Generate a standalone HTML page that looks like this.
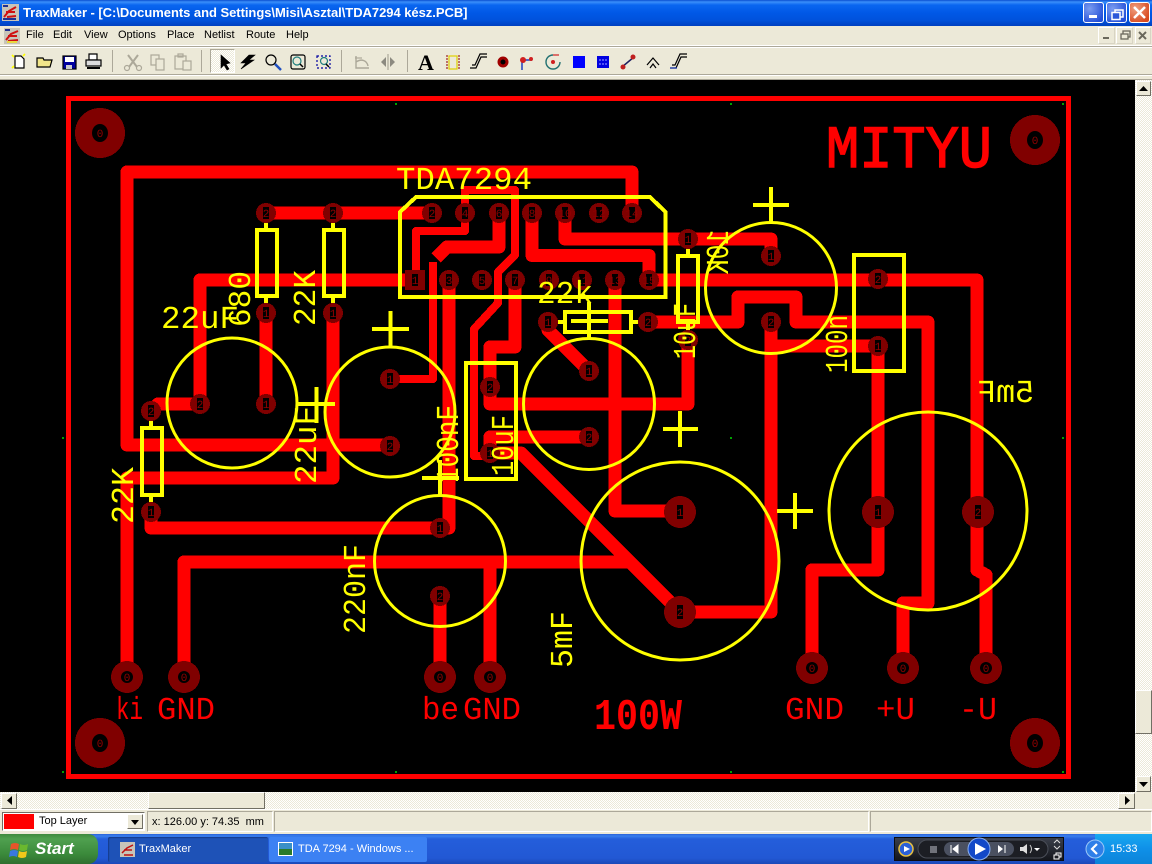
<!DOCTYPE html>
<html><head><meta charset="utf-8"><title>TraxMaker</title>
<style>
html,body{margin:0;padding:0;width:1152px;height:864px;overflow:hidden;background:#ece9d8;font-family:"Liberation Sans",sans-serif}
.a{position:absolute}
.m{position:absolute;top:27px;font-size:11px;line-height:16px;color:#000}
.dith{background:repeating-conic-gradient(#fff 0 25%,#ece9d8 0 50%) 0 0/2px 2px}
.btn{position:absolute;background:#ece9d8;box-sizing:border-box;border:1px solid;border-color:#fff #716f64 #716f64 #fff}
.sunk{position:absolute;box-sizing:border-box;border:1px solid;border-color:#aca899 #fff #fff #aca899}
.wb{position:absolute;top:2px;width:21px;height:21px;box-sizing:border-box;border:1px solid #fff;border-radius:3px;background:radial-gradient(circle at 30% 30%,#7a9cf0,#2450d8 80%)}
#pcb text{font-family:"Liberation Mono",monospace;font-size:32px;text-rendering:geometricPrecision}
#pcb .y text,#pcb text.y{fill:#ff0}
#pcb .r text{fill:#f00}
#pcb .n text{font-size:11px;fill:#900000;text-anchor:middle}
</style></head><body>

<!-- title bar -->
<div class="a" style="left:0;top:0;width:1152px;height:26px;background:linear-gradient(#0a4fd0 0,#3a8ffa 2px,#0a66f0 5px,#0058e6 13px,#0052dc 20px,#0040c0 26px)"></div>
<div class="a" style="left:23px;top:4px;font-size:13px;line-height:18px;font-weight:bold;color:#fff;white-space:pre;letter-spacing:-.04px">TraxMaker - [C:\Documents and Settings\Misi\Asztal\TDA7294 kész.PCB]</div>
<div class="wb" style="left:1083px"></div>
<div class="wb" style="left:1106px"></div>
<div class="wb" style="left:1129px;background:radial-gradient(circle at 30% 30%,#f0a080,#d84a20 80%)"></div>

<!-- menu -->
<div class="a" style="left:0;top:26px;width:1152px;height:20px;background:#ece9d8"></div>
<div class="m" style="left:26px">File</div>
<div class="m" style="left:53px">Edit</div>
<div class="m" style="left:84px">View</div>
<div class="m" style="left:118px">Options</div>
<div class="m" style="left:167px">Place</div>
<div class="m" style="left:204px">Netlist</div>
<div class="m" style="left:246px">Route</div>
<div class="m" style="left:286px">Help</div>
<div class="btn" style="left:1098px;top:27px;width:17px;height:17px;border-color:#fff #d8d4c4 #d8d4c4 #fff"></div>
<div class="btn" style="left:1116px;top:27px;width:17px;height:17px;border-color:#fff #d8d4c4 #d8d4c4 #fff"></div>
<div class="btn" style="left:1135px;top:27px;width:16px;height:17px;border-color:#fff #d8d4c4 #d8d4c4 #fff"></div>
<div class="a" style="left:0;top:45px;width:1152px;height:1px;background:#fff"></div>
<div class="a" style="left:0;top:46px;width:1152px;height:1px;background:#aca899"></div>
<div class="a" style="left:0;top:47px;width:1152px;height:1px;background:#fff"></div>
<div class="a" style="left:0;top:74px;width:1152px;height:1px;background:#aca899"></div>
<div class="a" style="left:0;top:75px;width:1152px;height:1px;background:#fff"></div>
<div class="a" style="left:0;top:79px;width:1152px;height:1px;background:#aca899"></div>

<!-- selected tool button -->
<div class="a dith" style="left:210px;top:49px;width:25px;height:24px;border:1px solid;border-color:#aca899 #fff #fff #aca899;box-sizing:border-box"></div>

<!-- canvas -->
<div class="a" style="left:0;top:80px;width:1135px;height:712px;background:#000"></div>

<!-- PCB + all icons -->
<svg id="pcb" class="a" style="left:0;top:0" width="1152" height="864" viewBox="0 0 1152 864" xmlns="http://www.w3.org/2000/svg">
<!-- app icon -->
<g>
<rect x="2" y="4" width="17" height="17" fill="#c8c4b8"/>
<path d="M4 17 L9 11 L16 7 M6 12 L15 12 M7 17 L16 16" stroke="#d01010" stroke-width="2" fill="none"/>
<path d="M3 6 H8 M3 19 H16" stroke="#203090" stroke-width="2"/>
<rect x="4" y="28" width="16" height="16" fill="#c8c4b8"/>
<path d="M6 40 L11 34 L18 31 M8 36 L17 36 M8 41 L18 40" stroke="#d01010" stroke-width="2" fill="none"/>
<path d="M5 30 H10" stroke="#203090" stroke-width="2"/><path d="M7 42 H17" stroke="#e8d840" stroke-width="2"/>
</g>
<!-- window buttons glyphs -->
<rect x="1089" y="15" width="8" height="3" fill="#fff"/>
<rect x="1115" y="10" width="8" height="7" fill="none" stroke="#fff" stroke-width="1.500"/><rect x="1112" y="12.500" width="8" height="7" fill="#2c58d8" stroke="#fff" stroke-width="1.500"/>
<path d="M1134 7 L1145 18 M1145 7 L1134 18" stroke="#fff" stroke-width="2.500"/>
<rect x="1103" y="37" width="6" height="2" fill="#6a685c"/>
<rect x="1123" y="31" width="7" height="6" fill="none" stroke="#6a685c" stroke-width="1.300"/><rect x="1121" y="34" width="7" height="5" fill="#ece9d8" stroke="#6a685c" stroke-width="1.300"/>
<path d="M1139 32 L1146 39 M1146 32 L1139 39" stroke="#6a685c" stroke-width="2"/>
<!-- toolbar separators -->
<g fill="#aca899"><rect x="112" y="50" width="1" height="22"/><rect x="201" y="50" width="1" height="22"/><rect x="341" y="50" width="1" height="22"/><rect x="407" y="50" width="1" height="22"/></g>
<!-- toolbar icons -->
<g stroke-width="1.200" fill="none">
<path d="M15 56 H21 L24 59 V68 H15 Z" fill="#fff" stroke="#000"/><path d="M12 55 L14 57 M12 68 L14 66 M25 54 L23 56" stroke="#ff0" stroke-width="1.600"/>
<path d="M37 58 H43 L44 60 H52 L50 67 H37 Z" fill="#f2e68a" stroke="#000"/>
<rect x="63" y="56" width="13" height="13" fill="#0000a0" stroke="#000"/><rect x="65" y="57" width="9" height="5" fill="#fff"/><rect x="66" y="65" width="6" height="4" fill="#ccc"/>
<path d="M89 54 H97 V60 H89 Z" fill="#fff" stroke="#000"/><rect x="86" y="60" width="15" height="6" fill="#ddd" stroke="#000"/><path d="M87 68 H100" stroke="#000" stroke-width="2"/>
<path d="M128 55 L137 67 M138 55 L129 67" stroke="#aca899" stroke-width="2"/><circle cx="127" cy="68" r="2.500" stroke="#aca899"/><circle cx="139" cy="68" r="2.500" stroke="#aca899"/>
<rect x="151" y="55" width="8" height="10" fill="#ece9d8" stroke="#aca899"/><rect x="156" y="59" width="8" height="11" fill="#ece9d8" stroke="#aca899"/>
<rect x="175" y="56" width="11" height="13" stroke="#aca899"/><rect x="178" y="54" width="5" height="3" stroke="#aca899"/><rect x="183" y="61" width="8" height="9" fill="#ece9d8" stroke="#aca899"/>
<path d="M221 55 V68 L224 65 L227 70 L229 69 L226 64 L230 63 Z" fill="#000" stroke="#000" stroke-width=".6"/>
<path d="M255 55 H249 L241 63 H246 L241 69 L254 60 H249 Z" fill="#000" stroke="#000" stroke-width=".6"/>
<circle cx="271" cy="60" r="5" stroke="#000"/><path d="M275 64 L281 70" stroke="#2050c0" stroke-width="2.500"/>
<rect x="291" y="55" width="14" height="14" rx="2" stroke="#000"/><circle cx="297" cy="61" r="4" stroke="#208080"/><path d="M300 64 L303 67" stroke="#000" stroke-width="1.500"/>
<rect x="317" y="56" width="13" height="12" stroke="#0000a0" stroke-dasharray="2 2"/><circle cx="324" cy="61" r="3.500" stroke="#208080"/><path d="M326 64 L329 67" stroke="#000" stroke-width="1.500"/>
<path d="M356 56 V68 H369 M356 62 C362 58 367 61 368 66" stroke="#aca899" stroke-width="1.400"/><path d="M355 58 L362 58" stroke="#aca899"/>
<path d="M386 57 L381 62 L386 67 Z M390 57 L395 62 L390 67 Z" fill="#8c8a80" stroke="none"/><path d="M388 54 V70" stroke="#aca899"/>
<rect x="449" y="56" width="8" height="13" fill="#ece9d8" stroke="#e0d000"/><path d="M447 55 V70 M459 55 V70" stroke="#a02020" stroke-dasharray="2 1"/>
<path d="M470 68 H476 L481 57 H487 M472 65 H475 L480 54 H487" stroke="#000"/>
<circle cx="503" cy="62" r="4" fill="#000" stroke="#a00000" stroke-width="3"/>
<path d="M522 70 V60 H532" stroke="#2040c0" stroke-width="1.500"/><circle cx="523" cy="60" r="3" fill="#d02020"/><circle cx="531" cy="59" r="2" fill="#d02020"/>
<path d="M553 55 A7 7 0 1 0 560 62" stroke="#207070" stroke-width="1.400"/><circle cx="553" cy="62" r="2" fill="#d02020"/><path d="M553 55 H559" stroke="#d02020"/>
<rect x="573" y="56" width="12" height="12" fill="#0000ff"/>
<rect x="597" y="56" width="12" height="12" fill="#0000e0"/><path d="M599 60 H607 M599 64 H607" stroke="#8080ff" stroke-dasharray="2 1"/>
<path d="M622 67 L634 57" stroke="#202060" stroke-width="1.500"/><circle cx="623" cy="67" r="2.500" fill="#c02020"/><circle cx="633" cy="57" r="2.500" fill="#c02020"/>
<path d="M647 65 L653 58 L659 65 M650 68 L653 64 L656 68" stroke="#000"/>
<path d="M670 68 H676 L681 57 H687 M672 65 H675 L680 54 H687" stroke="#000"/><path d="M670 68 H677" stroke="#2040c0"/>
</g>
<text x="418" y="70" style="font-family:'Liberation Serif',serif;font-size:22px;font-weight:bold" fill="#000">A</text>

<!-- traces -->
<g shape-rendering="crispEdges" fill="none" stroke="#f00" stroke-linejoin="round">
<rect x="68.500" y="98.500" width="1000" height="678" stroke-width="5" stroke-linejoin="miter"/>
<g stroke-width="13">
<path d="M632 213 V172 H127 V445 H390"/>
<path d="M127 677 V478 H333 V313"/>
<path d="M151 512 V528 H440"/>
<path d="M151 411 L158 404 H200 V280 H415"/>
<path d="M266 313 V404"/>
<path d="M266 213 H432"/>
<path d="M499 213 V247 H447 L436 258"/>
<path d="M449 280 V528 H440"/>
<path d="M649 280 H977 V570 L986 575 V668"/>
<path d="M440 596 V677"/>
<path d="M184 677 V562 H630"/>
<path d="M490 562 V677"/>
<path d="M589 437 H490 V453 H521 L680 612"/>
<path d="M548 322 V330 L589 371"/>
<path d="M648 322 H738 V297 H796 V322 H928 V603 H903 V668"/>
<path d="M771 322 V612 H680"/>
<path d="M771 346 H878 V570 H812 V668"/>
<path d="M565 213 V239 H771 V256"/>
<path d="M532 213 V255.500 H649 V280"/>
<path d="M615 280 V511 H680"/>
<path d="M515 280 V347 H490 V404 H688 V340"/>
</g>
<g stroke-width="8">
<path d="M465 213 V231 H416 V280"/>
<path d="M433 262 V379 H390"/>
<path d="M465 213 V190 H515 V255 L498 272 V303 L474 329 V456 H490"/>
</g>
</g>

<!-- pads -->
<g shape-rendering="crispEdges" fill="#800000">
<circle cx="100" cy="133" r="25"/><circle cx="1035" cy="140" r="25"/><circle cx="100" cy="743" r="25"/><circle cx="1035" cy="743" r="25"/>
<circle cx="127" cy="677" r="16"/><circle cx="184" cy="677" r="16"/><circle cx="440" cy="677" r="16"/><circle cx="490" cy="677" r="16"/><circle cx="812" cy="668" r="16"/><circle cx="903" cy="668" r="16"/><circle cx="986" cy="668" r="16"/>
<circle cx="680" cy="512" r="16"/><circle cx="680" cy="612" r="16"/><circle cx="878" cy="512" r="16"/><circle cx="978" cy="512" r="16"/>
<rect x="405" y="270" width="20" height="20"/>
<circle cx="432" cy="213" r="10"/><circle cx="465" cy="213" r="10"/><circle cx="499" cy="213" r="10"/><circle cx="532" cy="213" r="10"/><circle cx="565" cy="213" r="10"/><circle cx="599" cy="213" r="10"/><circle cx="632" cy="213" r="10"/>
<circle cx="449" cy="280" r="10"/><circle cx="482" cy="280" r="10"/><circle cx="515" cy="280" r="10"/><circle cx="549" cy="280" r="10"/><circle cx="582" cy="280" r="10"/><circle cx="615" cy="280" r="10"/><circle cx="649" cy="280" r="10"/>
<circle cx="266" cy="213" r="10"/><circle cx="333" cy="213" r="10"/><circle cx="266" cy="313" r="10"/><circle cx="333" cy="313" r="10"/>
<circle cx="200" cy="404" r="10"/><circle cx="266" cy="404" r="10"/><circle cx="151" cy="411" r="10"/><circle cx="151" cy="512" r="10"/>
<circle cx="390" cy="379" r="10"/><circle cx="390" cy="446" r="10"/><circle cx="440" cy="528" r="10"/><circle cx="440" cy="596" r="10"/>
<circle cx="490" cy="387" r="10"/><circle cx="490" cy="453" r="10"/><circle cx="589" cy="371" r="10"/><circle cx="589" cy="437" r="10"/>
<circle cx="548" cy="322" r="10"/><circle cx="648" cy="322" r="10"/><circle cx="688" cy="239" r="10"/><circle cx="688" cy="340" r="10"/>
<circle cx="771" cy="256" r="10"/><circle cx="771" cy="322" r="10"/><circle cx="878" cy="279" r="10"/><circle cx="878" cy="346" r="10"/>
</g>
<!-- holes -->
<g fill="#000">
<ellipse cx="100" cy="133" rx="8" ry="9"/><ellipse cx="1035" cy="140" rx="8" ry="9"/><ellipse cx="100" cy="743" rx="8" ry="9"/><ellipse cx="1035" cy="743" rx="8" ry="9"/>
<circle cx="127" cy="677" r="6"/><circle cx="184" cy="677" r="6"/><circle cx="440" cy="677" r="6"/><circle cx="490" cy="677" r="6"/><circle cx="812" cy="668" r="6"/><circle cx="903" cy="668" r="6"/><circle cx="986" cy="668" r="6"/>
<rect x="677" y="505" width="6" height="14"/><rect x="677" y="605" width="6" height="14"/><rect x="875" y="505" width="6" height="14"/><rect x="975" y="505" width="6" height="14"/>
</g>
<g fill="#000" stroke="#000" stroke-width="2">
<path d="M413 275h4v10h-4zM430 208h4v10h-4zM463 208h4v10h-4zM497 208h4v10h-4zM530 208h4v10h-4zM563 208h4v10h-4zM597 208h4v10h-4zM630 208h4v10h-4zM447 275h4v10h-4zM480 275h4v10h-4zM513 275h4v10h-4zM547 275h4v10h-4zM580 275h4v10h-4zM613 275h4v10h-4zM647 275h4v10h-4zM264 208h4v10h-4zM331 208h4v10h-4zM264 308h4v10h-4zM331 308h4v10h-4zM198 399h4v10h-4zM264 399h4v10h-4zM149 406h4v10h-4zM149 507h4v10h-4zM388 374h4v10h-4zM388 441h4v10h-4zM438 523h4v10h-4zM438 591h4v10h-4zM488 382h4v10h-4zM488 448h4v10h-4zM587 366h4v10h-4zM587 432h4v10h-4zM546 317h4v10h-4zM646 317h4v10h-4zM686 234h4v10h-4zM686 335h4v10h-4zM769 251h4v10h-4zM769 317h4v10h-4zM876 274h4v10h-4zM876 341h4v10h-4z"/>
</g>
<g class="n">
<text x="100" y="137">0</text><text x="1035" y="144">0</text><text x="100" y="747">0</text><text x="1035" y="747">0</text>
<text x="127" y="681">0</text><text x="184" y="681">0</text><text x="440" y="681">0</text><text x="490" y="681">0</text><text x="812" y="672">0</text><text x="903" y="672">0</text><text x="986" y="672">0</text>
<text x="680" y="516">1</text><text x="680" y="616">2</text><text x="878" y="516">1</text><text x="978" y="516">2</text>
<text x="415" y="284">1</text><text x="432" y="217">2</text><text x="465" y="217">4</text><text x="499" y="217">6</text><text x="532" y="217">8</text><text x="565" y="217">10</text><text x="599" y="217">12</text><text x="632" y="217">14</text>
<text x="449" y="284">3</text><text x="482" y="284">5</text><text x="515" y="284">7</text><text x="549" y="284">9</text><text x="582" y="284">11</text><text x="615" y="284">13</text><text x="649" y="284">15</text>
<text x="266" y="217">2</text><text x="333" y="217">2</text><text x="266" y="317">1</text><text x="333" y="317">1</text>
<text x="200" y="408">2</text><text x="266" y="408">1</text><text x="151" y="415">2</text><text x="151" y="516">1</text>
<text x="390" y="383">1</text><text x="390" y="450">2</text><text x="440" y="532">1</text><text x="440" y="600">2</text>
<text x="490" y="391">2</text><text x="490" y="457">1</text><text x="589" y="375">1</text><text x="589" y="441">2</text>
<text x="548" y="326">1</text><text x="648" y="326">2</text><text x="688" y="243">1</text><text x="688" y="344">2</text>
<text x="771" y="260">1</text><text x="771" y="326">2</text><text x="878" y="283">2</text><text x="878" y="350">1</text>
</g>

<!-- silkscreen -->
<g shape-rendering="crispEdges" fill="none" stroke="#ff0" stroke-width="4">
<path d="M400 212 L416 197 H650 L665.500 212 V297 H400 Z"/>
<rect x="257" y="230" width="20" height="66"/><path d="M266 223 V230 M266 296 V303"/>
<rect x="324" y="230" width="20" height="66"/><path d="M333 223 V230 M333 296 V303"/>
<rect x="142" y="428" width="20" height="67"/><path d="M151 421 V428 M151 495 V502"/>
<rect x="565" y="312" width="66" height="20"/><path d="M558 322 H565 M631 322 H638"/>
<rect x="678" y="256" width="20" height="66"/><path d="M688 249 V256 M688 322 V330"/>
<rect x="466" y="363" width="50" height="116"/>
<rect x="854" y="255" width="50" height="116"/>
<path d="M372 329 H409 M390.500 311 V347 M298 404 H335 M316.500 387 V423 M422 478 H459 M440 460 V495 M571 321 H608 M589 302 V338 M753 205 H789 M771 187 V222 M663 429 H698 M680 411 V447 M777 511 H813 M795 493 V529"/>
</g>
<g fill="none" stroke="#ff0" stroke-width="3">
<circle cx="232" cy="403" r="65"/><circle cx="390" cy="412" r="65"/><circle cx="440" cy="561" r="65.500"/><circle cx="589" cy="404" r="65.500"/><circle cx="771" cy="288" r="65.500"/><circle cx="680" cy="561" r="99"/><circle cx="928" cy="511" r="99"/>
</g>
<g class="y">
<text x="396" y="189" textLength="136" lengthAdjust="spacingAndGlyphs">TDA7294</text>
<text x="161" y="328" textLength="78" lengthAdjust="spacingAndGlyphs">22uF</text>
<text x="537" y="303" textLength="56" lengthAdjust="spacingAndGlyphs">22k</text>
<text transform="translate(250,327) rotate(-90)" textLength="56" lengthAdjust="spacingAndGlyphs">680</text>
<text transform="translate(315,326) rotate(-90)" textLength="56" lengthAdjust="spacingAndGlyphs">22K</text>
<text transform="translate(316,484) rotate(-90)" textLength="78" lengthAdjust="spacingAndGlyphs">22uF</text>
<text transform="translate(133,524) rotate(-90)" textLength="57" lengthAdjust="spacingAndGlyphs">22K</text>
<text transform="translate(458,483) rotate(-90)" textLength="78" lengthAdjust="spacingAndGlyphs">100nF</text>
<text transform="translate(513,476) rotate(-90)" textLength="61" lengthAdjust="spacingAndGlyphs">10uF</text>
<text transform="translate(695,359) rotate(-90)" textLength="56" lengthAdjust="spacingAndGlyphs">10uF</text>
<text transform="translate(572,668) rotate(-90)" textLength="57" lengthAdjust="spacingAndGlyphs">5mF</text>
<text transform="translate(365,634) rotate(-90)" textLength="90" lengthAdjust="spacingAndGlyphs">220nF</text>
<text transform="translate(847,373) rotate(-90)" textLength="58" lengthAdjust="spacingAndGlyphs">100n</text>
<text transform="translate(728,230) rotate(90) scale(1,-1)" textLength="44" lengthAdjust="spacingAndGlyphs">10K</text>
<text transform="translate(1034,402) scale(-1,1)" textLength="57" lengthAdjust="spacingAndGlyphs">5mF</text>
</g>
<g class="r">
<text x="826" y="167" textLength="166" lengthAdjust="spacingAndGlyphs" stroke="#f00" stroke-width="1.500" style="font-size:60px">MITYU</text>
<text x="594" y="729" textLength="88" lengthAdjust="spacingAndGlyphs" style="font-size:44px;font-weight:bold">100W</text>
<text x="116" y="719" textLength="27" lengthAdjust="spacingAndGlyphs">ki</text>
<text x="157" y="719" textLength="58" lengthAdjust="spacingAndGlyphs">GND</text>
<text x="422" y="719" textLength="37" lengthAdjust="spacingAndGlyphs">be</text>
<text x="463" y="719" textLength="58" lengthAdjust="spacingAndGlyphs">GND</text>
<text x="785" y="719" textLength="59" lengthAdjust="spacingAndGlyphs">GND</text>
<text x="876" y="719" textLength="39" lengthAdjust="spacingAndGlyphs">+U</text>
<text x="959" y="719" textLength="38" lengthAdjust="spacingAndGlyphs">-U</text>
</g>
<!-- grid marks -->
<g fill="#00a000">
<rect x="395" y="103" width="2" height="2"/><rect x="730" y="103" width="2" height="2"/><rect x="62" y="771" width="2" height="2"/><rect x="1062" y="771" width="2" height="2"/><rect x="62" y="437" width="2" height="2"/><rect x="730" y="437" width="2" height="2"/><rect x="395" y="771" width="2" height="2"/><rect x="730" y="771" width="2" height="2"/><rect x="1062" y="103" width="2" height="2"/><rect x="1062" y="437" width="2" height="2"/>
</g>
</svg>

<!-- scrollbars -->
<div class="a dith" style="left:1135px;top:80px;width:17px;height:712px"></div>
<div class="btn" style="left:1136px;top:81px;width:15px;height:15px"></div>
<div class="btn" style="left:1135px;top:690px;width:17px;height:44px"></div>
<div class="btn" style="left:1136px;top:776px;width:15px;height:16px"></div>
<div class="a dith" style="left:0;top:792px;width:1135px;height:17px"></div>
<div class="btn" style="left:1px;top:793px;width:16px;height:16px"></div>
<div class="btn" style="left:148px;top:792px;width:117px;height:17px"></div>
<div class="btn" style="left:1118px;top:793px;width:17px;height:16px"></div>
<div class="a" style="left:1135px;top:792px;width:17px;height:18px;background:#ece9d8"></div>

<!-- status bar -->
<div class="a" style="left:0;top:809px;width:1152px;height:25px;background:#ece9d8;border-top:1px solid #fff;box-sizing:border-box"></div>
<div class="sunk" style="left:2px;top:812px;width:143px;height:19px;background:#fff;border-color:#716f64 #fff #fff #716f64"></div>
<div class="a" style="left:4px;top:814px;width:30px;height:15px;background:#f00"></div>
<div class="a" style="left:39px;top:814px;font-size:11px;line-height:14px;color:#000">Top Layer</div>
<div class="btn" style="left:127px;top:814px;width:16px;height:15px"></div>
<div class="sunk" style="left:147px;top:811px;width:126px;height:21px"></div>
<div class="a" style="left:152px;top:815px;font-size:11px;line-height:14px;color:#000;white-space:pre">x: 126.00 y: 74.35  mm</div>
<div class="sunk" style="left:274px;top:811px;width:595px;height:21px"></div>
<div class="sunk" style="left:870px;top:811px;width:282px;height:21px"></div>

<!-- taskbar -->
<div class="a" style="left:0;top:834px;width:1152px;height:30px;background:linear-gradient(#2a62d8 0,#3a80ee 2px,#245edb 5px,#2258d4 24px,#1a48b8 30px)"></div>
<div class="a" style="left:0;top:834px;width:98px;height:30px;border-radius:0 10px 10px 0;background:linear-gradient(#3e8a3e 0,#4fa04f 5px,#3b8a3b 20px,#2f6f2f 30px)"></div>
<div class="a" style="left:35px;top:838px;font-size:17px;line-height:22px;font-weight:bold;font-style:italic;color:#fff">Start</div>
<div class="a" style="left:108px;top:837px;width:160px;height:25px;background:#1e52b7;border-radius:2px;box-shadow:inset 1px 1px 1px #163c8c"></div>
<div class="a" style="left:139px;top:842px;font-size:11px;line-height:15px;color:#fff">TraxMaker</div>
<div class="a" style="left:269px;top:837px;width:158px;height:25px;background:#3c81f3;border-radius:2px"></div>
<div class="a" style="left:298px;top:842px;font-size:11px;line-height:15px;color:#fff;white-space:pre">TDA 7294 - Windows ...</div>
<div class="a" style="left:894px;top:837px;width:170px;height:24px;background:linear-gradient(#3a3f4a,#14161c);border:1px solid #0a0c12;box-sizing:border-box"></div>
<div class="a" style="left:1095px;top:834px;width:57px;height:30px;background:linear-gradient(#18a8f0,#0f90e8 50%,#0c84d8)"></div>
<div class="a" style="left:1110px;top:842px;font-size:11px;line-height:15px;color:#fff">15:33</div>

<svg class="a" style="left:0;top:780px" width="1152" height="84" viewBox="0 780 1152 84" xmlns="http://www.w3.org/2000/svg">
<!-- scroll arrows -->
<path d="M12 796 V805 L7 800.500 Z" fill="#000"/>
<path d="M1125 796 V805 L1130 800.500 Z" fill="#000"/>
<path d="M1139 782 H1148 L1143.500 787 Z" fill="#000"/>
<path d="M131 820 H139 L135 825 Z" fill="#000"/>
<!-- start flag -->
<path d="M11 844 Q15 842 19 844 L18 850 Q14 848 10 850 Z" fill="#e8552a"/>
<path d="M20 844 Q24 846 28 844 L27 850 Q23 852 19 850 Z" fill="#6ab82e"/>
<path d="M10 851 Q14 849 18 851 L17 857 Q13 855 9 857 Z" fill="#3a78e0"/>
<path d="M19 851 Q23 853 27 851 L26 857 Q22 859 18 857 Z" fill="#f2c81a"/>
<!-- taskbar icons -->
<rect x="120" y="842" width="15" height="15" fill="#c8c4b8"/><path d="M122 853 L127 848 L133 845 M124 850 H132 M124 855 H133" stroke="#c01010" stroke-width="1.500" fill="none"/>
<rect x="278" y="842" width="15" height="14" fill="#fff"/><rect x="279" y="843" width="13" height="6" fill="#3a90c8"/><rect x="279" y="849" width="13" height="6" fill="#2a7a2a"/>
<!-- WMP -->
<circle cx="906" cy="849" r="7" fill="#2a60d8" stroke="#e8c040" stroke-width="1.500"/><path d="M904 846 L910 849 L904 852 Z" fill="#fff"/>
<rect x="918" y="840" width="130" height="18" rx="9" fill="#1c1e24" stroke="#4a4e58"/>
<rect x="930" y="846" width="7" height="7" fill="#70727a"/>
<rect x="944" y="842" width="70" height="14" rx="7" fill="#4a5060"/>
<path d="M951 845 V853 M958 845 L953 849 L958 853 Z M1005 845 V853" stroke="#fff" fill="#fff"/>
<path d="M998 845 L1003 849 L998 853 Z" fill="#fff"/>
<circle cx="979" cy="849" r="11" fill="#1248c8" stroke="#8ab0f0"/><path d="M975 843 L986 849 L975 855 Z" fill="#fff"/>
<path d="M1020 847 H1023 L1027 844 V854 L1023 851 H1020 Z" fill="#ddd"/><path d="M1030 845 Q1033 849 1030 853" stroke="#ccc" fill="none"/>
<path d="M1034 848 H1040 L1037 851 Z" fill="#fff"/>
<path d="M1054 843 L1057 840 L1060 843 M1054 846 L1057 849 L1060 846" stroke="#ddd" fill="none"/>
<rect x="1056" y="853" width="5" height="4" fill="none" stroke="#fff"/><rect x="1054" y="855" width="5" height="4" fill="#1c1e24" stroke="#fff"/>
<!-- tray chevron -->
<circle cx="1095" cy="849" r="9" fill="#2f7fe8" stroke="#9cc8f8"/>
<path d="M1097 844 L1092 849 L1097 854" stroke="#fff" stroke-width="2.200" fill="none"/>
</svg>
<!-- top scroll arrow -->
<svg class="a" style="left:1136px;top:81px" width="15" height="15" xmlns="http://www.w3.org/2000/svg"><path d="M3 10 H12 L7.500 5 Z" fill="#000"/></svg>
</body></html>
